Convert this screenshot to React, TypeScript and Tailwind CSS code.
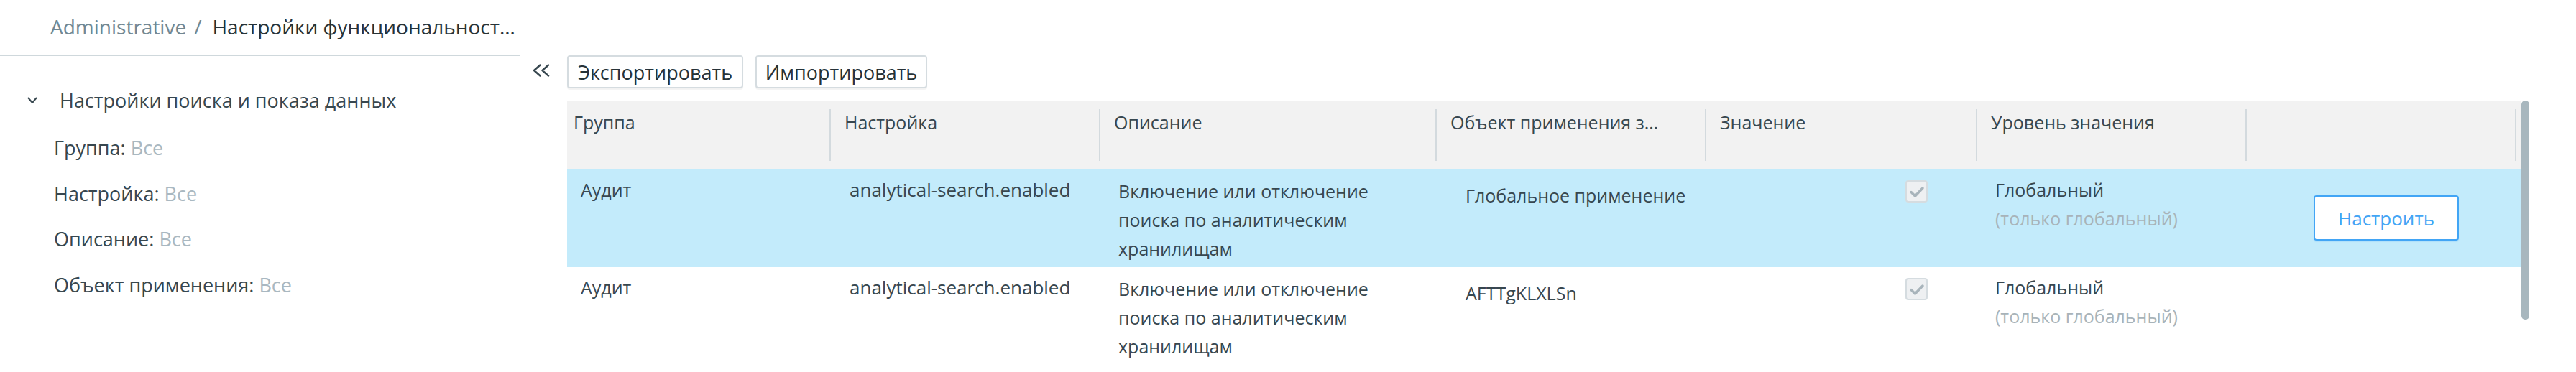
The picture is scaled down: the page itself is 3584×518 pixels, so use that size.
const HEADERS = [
  "Группа",
  "Настройка",
  "Описание",
  "Объект применения з…",
  "Значение",
  "Уровень значения",
  "",
];

const ROWS = [
  {
    group: "Аудит",
    key: "analytical-search.enabled",
    desc: "Включение или отключение поиска по аналитическим хранилищам",
    target: "Глобальное применение",
    level: "Глобальный",
    note: "(только глобальный)",
    selected: true,
  },
  {
    group: "Аудит",
    key: "analytical-search.enabled",
    desc: "Включение или отключение поиска по аналитическим хранилищам",
    target: "AFTTgKLXLSn",
    level: "Глобальный",
    note: "(только глобальный)",
    selected: false,
  },
];

const FILTERS = ["Группа", "Настройка", "Описание", "Объект применения"];

function Checkbox() {
  return (
    <div className="w-[31px] h-[31px] rounded-[4px] border-2 border-[#d5dce0] bg-[#eef0f2] flex items-center justify-center">
      <svg width="22" height="18" viewBox="0 0 22 18" fill="none">
        <path d="M3 9.5 L8.5 15 L19 4" stroke="#a8b4bb" strokeWidth="3.5" strokeLinecap="round" strokeLinejoin="round" />
      </svg>
    </div>
  );
}

function Sidebar() {
  return (
    <aside className="w-[723px] shrink-0">
      <div className="h-[78px] border-b-2 border-[#cfd8dc] pl-[70px] pt-[17px] flex leading-[40px] text-[28px] whitespace-nowrap">
        <span className="text-[#718792]">Administrative</span>
        <span className="text-[#718792] ml-[11px] mr-[15px]">/</span>
        <span className="text-[#263238]">Настройки функциональност…</span>
      </div>
      <div className="pt-[42px] leading-[40px] text-[27px]">
        <div className="flex items-center pl-[38px] text-[#37474f]">
          <svg width="14" height="10" viewBox="0 0 14 10" fill="none" className="shrink-0">
            <path d="M1.5 1.5 L7 8 L12.5 1.5" stroke="#37474f" strokeWidth="2" strokeLinecap="round" strokeLinejoin="round" />
          </svg>
          <span className="ml-[31px]">Настройки поиска и показа данных</span>
        </div>
        <div className="mt-[26px] flex flex-col gap-[23.5px] pl-[75px]">
          {FILTERS.map((f) => (
            <div key={f} className="text-[#37474f]">
              {f}: <span className="text-[#a9b8c1]">Все</span>
            </div>
          ))}
        </div>
      </div>
    </aside>
  );
}

function Table() {
  return (
    <div className="flex">
      <div className="w-[2719px] text-[25px] leading-[40px] text-[#37474f]">
        <div className="grid grid-cols-[367px_375px_468px_375px_377px_375px_375px_1fr] h-[96px] bg-[#f2f2f2]">
          {HEADERS.map((h, i) => (
            <div key={i} className="flex min-w-0">
              <div className={`flex-1 min-w-0 pt-[10px] whitespace-nowrap ${i === 0 ? "pl-[9px]" : "pl-[19px]"}`}>
                {h}
              </div>
              <div className="w-[2px] my-[12px] bg-[#d3dade] shrink-0" />
            </div>
          ))}
          <div />
        </div>
        {ROWS.map((r, i) => (
          <div
            key={i}
            className={`grid grid-cols-[367px_375px_468px_375px_377px_375px_375px_1fr] h-[136px] ${
              r.selected ? "bg-[#c3ebfb]" : "bg-white"
            }`}
          >
            <div className="pl-[19px] pt-[8px]">{r.group}</div>
            <div className="pl-[26px] pt-[8px] whitespace-nowrap text-[26px]">{r.key}</div>
            <div className="pl-[25px] pr-[40px] pt-[10px]">{r.desc}</div>
            <div className="pl-[40px] pt-[16px] whitespace-nowrap">{r.target}</div>
            <div className="flex justify-end pr-[69px] pt-[15px]">
              <Checkbox />
            </div>
            <div className="pl-[25px] pt-[8px] whitespace-nowrap">
              <div>{r.level}</div>
              <div className="text-[#a8b3b9]">{r.note}</div>
            </div>
            <div className="pl-[93px] pt-[36px]">
              {r.selected && (
                <button className="w-[202px] h-[63px] rounded-[4px] border-2 border-[#42a5f5] bg-white text-[#42a5f5] text-[26px] leading-[40px] shadow-[0_2px_1px_rgba(66,165,245,0.15)]">
                  Настроить
                </button>
              )}
            </div>
            <div />
          </div>
        ))}
      </div>
      <div className="w-[11px] h-[305px] rounded-full bg-[#a8b7be]" />
    </div>
  );
}

export default function App() {
  return (
    <div className="w-[3584px] h-[518px] overflow-hidden bg-white flex font-['Open_Sans',sans-serif]">
      <Sidebar />
      <div className="w-[66px] shrink-0 pl-[17px] pt-[89px]">
        <svg width="26" height="18" viewBox="0 0 26 18" fill="none">
          <path d="M11.5 1.5 L3 9 L11.5 16.5 M23 1.5 L14.5 9 L23 16.5" stroke="#37474f" strokeWidth="2.5" strokeLinecap="round" strokeLinejoin="round" />
        </svg>
      </div>
      <main className="flex-1 pt-[77px]">
        <div className="flex gap-[17px] h-[46px] text-[27px]">
          <button className="w-[245px] h-[46px] rounded-[4px] border-2 border-[#d5dce0] bg-white text-[#263238] leading-[40px] pt-[2px] shadow-[0_2px_1px_rgba(0,0,0,0.05)]">
            Экспортировать
          </button>
          <button className="w-[239px] h-[46px] rounded-[4px] border-2 border-[#d5dce0] bg-white text-[#263238] leading-[40px] pt-[2px] shadow-[0_2px_1px_rgba(0,0,0,0.05)]">
            Импортировать
          </button>
        </div>
        <div className="mt-[17px]">
          <Table />
        </div>
      </main>
    </div>
  );
}
